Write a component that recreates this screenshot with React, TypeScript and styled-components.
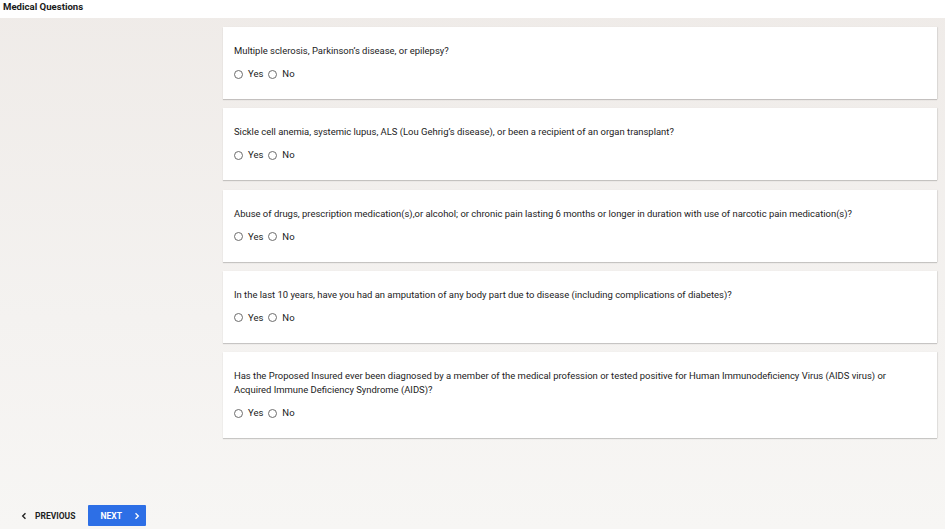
import { FC } from 'react';
import styled, { createGlobalStyle } from 'styled-components';

const GlobalStyle = createGlobalStyle`
  html, body {
    margin: 0;
    padding: 0;
  }
  body {
    font-family: Roboto, "Liberation Sans", Arial, sans-serif;
    color: #212121;
  }
`;

const questions = [
  { id: 'q1', text: 'Multiple sclerosis, Parkinson\u2019s disease, or epilepsy?' },
  {
    id: 'q2',
    text: 'Sickle cell anemia, systemic lupus, ALS (Lou Gehrig\u2019s disease), or been a recipient of an organ transplant?',
  },
  {
    id: 'q3',
    text: 'Abuse of drugs, prescription medication(s),or alcohol; or chronic pain lasting 6 months or longer in duration with use of narcotic pain medication(s)?',
  },
  {
    id: 'q4',
    text: 'In the last 10 years, have you had an amputation of any body part due to disease (including complications of diabetes)?',
  },
  {
    id: 'q5',
    text: 'Has the Proposed Insured ever been diagnosed by a member of the medical profession or tested positive for Human Immunodeficiency Virus (AIDS virus) or Acquired Immune Deficiency Syndrome (AIDS)?',
  },
];

const ChevronLeft = () => (
  <svg width="8" height="8" viewBox="0 0 24 24" fill="none" stroke="currentColor" strokeWidth="4" strokeLinecap="square">
    <path d="M15 5 8 12l7 7" />
  </svg>
);

const ChevronRight = () => (
  <svg width="8" height="8" viewBox="0 0 24 24" fill="none" stroke="currentColor" strokeWidth="4" strokeLinecap="square">
    <path d="M9 5l7 7-7 7" />
  </svg>
);

const QuestionCard: FC<{ id: string; text: string }> = ({ id, text }) => (
  <Card>
    <Question>{text}</Question>
    <Options>
      <Option>
        <Radio type="radio" name={id} value="yes" />
        Yes
      </Option>
      <Option>
        <Radio type="radio" name={id} value="no" />
        No
      </Option>
    </Options>
  </Card>
);

const App: FC = () => (
  <Page>
    <GlobalStyle />
    <Header>Medical Questions</Header>
    <Body>
      <Sidebar />
      <CardList>
        {questions.map((q) => (
          <QuestionCard key={q.id} id={q.id} text={q.text} />
        ))}
      </CardList>
    </Body>
    <Footer>
      <BackButton type="button">
        <ChevronLeft />
        PREVIOUS
      </BackButton>
      <NextButton type="button">
        NEXT
        <ChevronRight />
      </NextButton>
    </Footer>
  </Page>
);

const Page = styled.div`
  min-height: 100vh;
  display: flex;
  flex-direction: column;
  background: linear-gradient(180deg, #efebe8 0%, #f4f2f0 60%, #f7f6f4 100%);
`;

const Header = styled.div`
  height: 18px;
  background: #ffffff;
  padding: 0 3px;
  font-size: 9.6px;
  font-weight: 700;
  line-height: 14px;
  color: #1a1a1a;
`;

const Body = styled.div`
  display: flex;
  padding: 9px 8px 0 0;
`;

const Sidebar = styled.div`
  width: 223px;
  flex-shrink: 0;
`;

const CardList = styled.div`
  flex: 1;
  display: flex;
  flex-direction: column;
  gap: 9.25px;
`;

const Card = styled.div`
  background: #ffffff;
  padding: 17px 11px 18px;
  box-shadow: 0 1px 1px rgba(0, 0, 0, 0.18), 1px 0 1px rgba(0, 0, 0, 0.06);
`;

const Question = styled.div`
  font-size: 9.45px;
  line-height: 14px;
  padding-right: 36px;
  color: #222222;
  margin-bottom: 9px;
`;

const Options = styled.div`
  display: flex;
  align-items: center;
  gap: 5px;
  height: 14px;
  line-height: 14px;
`;

const Option = styled.label`
  display: flex;
  align-items: center;
  gap: 5px;
  height: 14px;
  font-size: 9.5px;
  color: #222222;
`;

const Radio = styled.input`
  appearance: none;
  margin: 0;
  width: 9px;
  height: 9px;
  border: 1px solid #6d6d6d;
  border-radius: 50%;
  background: #ffffff;
  box-sizing: border-box;
`;

const Footer = styled.div`
  margin-top: auto;
  display: flex;
  align-items: center;
  gap: 13px;
  padding: 0 0 3px 20px;
`;

const BackButton = styled.button`
  display: flex;
  align-items: center;
  gap: 7px;
  border: 0;
  background: none;
  padding: 0;
  font-family: Roboto, "Liberation Sans", Arial, sans-serif;
  font-size: 8.5px;
  font-weight: 700;
  color: #1f1f1f;
  cursor: pointer;
`;

const NextButton = styled.button`
  display: flex;
  align-items: center;
  gap: 11px;
  width: 58px;
  height: 21px;
  padding: 0 0 0 12px;
  border: 0;
  border-radius: 1px;
  background: #2d6fe6;
  color: #ffffff;
  font-family: Roboto, "Liberation Sans", Arial, sans-serif;
  font-size: 8.5px;
  font-weight: 700;
  cursor: pointer;
`;

export default App;
